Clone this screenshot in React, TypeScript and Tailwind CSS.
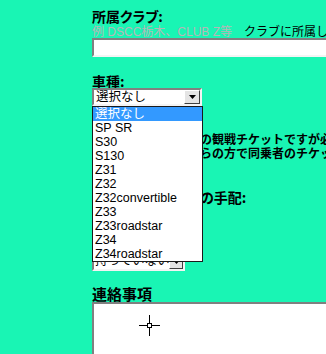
import React from "react";

const label =
  "text-[14px] leading-[14px] font-bold text-black whitespace-nowrap [font-feature-settings:'palt'] font-['Noto_Sans_CJK_JP',sans-serif]";

const options = [
  "選択なし",
  "SP SR",
  "S30",
  "S130",
  "Z31",
  "Z32",
  "Z32convertible",
  "Z33",
  "Z33roadstar",
  "Z34",
  "Z34roadstar",
];

function Arrow() {
  return (
    <div className="flex h-full w-[16px] items-center justify-center border border-t-[#ffffff] border-l-[#ffffff] border-b-[#404040] border-r-[#404040] bg-[#e4e4e4]">
      <svg width="7" height="4" viewBox="0 0 7 4">
        <polygon points="0,0 7,0 3.5,4" fill="#000" />
      </svg>
    </div>
  );
}

export default function App() {
  return (
    <div className="relative h-[354px] w-[326px] overflow-hidden bg-[#19f5b4] font-['Liberation_Sans','Noto_Sans_CJK_JP',sans-serif] text-black">
      <div className="flex flex-col pl-[92px] pt-[9px]">
        <div className={label + " h-[15px]"}>所属クラブ:</div>
        <div className="mt-[2px] h-[12px] whitespace-nowrap text-[12px] leading-[12px]">
          <span className="text-[#b6b6b6]">例 DSCC栃木、CLUB Z等</span>
          <span>　クラブに所属している方はクラブ名をご記入ください</span>
        </div>
        <div className="h-[19px] w-[300px] shrink-0 border-2 border-t-[#808080] border-l-[#808080] border-b-[#f4f4f4] border-r-[#f4f4f4] bg-white" />

        <div className={label + " mt-[17px] h-[14px]"}>車種:</div>
        <div className="relative h-[18px] w-[110px]">
          <div className="flex h-[18px] w-[110px] items-stretch border-2 border-t-[#808080] border-l-[#808080] border-b-[#f4f4f4] border-r-[#f4f4f4] bg-white">
            <div className="flex-1 pl-[2px] text-[12.5px] leading-[14px]">選択なし</div>
            <Arrow />
          </div>
          <div className="absolute left-0 top-[18px] z-10 w-[111px] border border-[#1a1a1a] bg-white">
            {options.map((o, i) => (
              <div
                key={o}
                className={
                  i === 0
                    ? "h-[14px] whitespace-nowrap bg-[#3399ff] pl-[2px] text-[12.5px] leading-[14px] text-white"
                    : "h-[14px] whitespace-nowrap pl-[2px] text-[12.5px] leading-[14px] text-black"
                }
              >
                {o}
              </div>
            ))}
          </div>
        </div>

        <div className="mt-[26px] flex flex-col font-['Noto_Sans_CJK_JP',sans-serif] text-[12px] font-bold leading-[14px]">
          <div className="h-[14px] whitespace-nowrap">
            <span className="inline-block w-[108px] overflow-hidden align-top">お渡しするのは決勝日</span>
            <span>の観戦チケットですが必要な方は</span>
          </div>
          <div className="h-[14px] whitespace-nowrap">
            <span className="inline-block w-[108px] overflow-hidden align-top">ご希望の場合はこち</span>
            <span>らの方で同乗者のチケットも手配します</span>
          </div>
        </div>

        <div className={label + " mt-[30px] h-[14px]"}>
          <span className="inline-block w-[108px] overflow-hidden align-top">同乗者チケット</span>
          <span>の手配:</span>
        </div>

        <div className="mt-[48px] flex h-[19px] w-[93px] items-stretch border-2 border-t-[#808080] border-l-[#808080] border-b-[#f4f4f4] border-r-[#f4f4f4] bg-white">
          <div className="flex-1 whitespace-nowrap pl-[1px] text-[12.5px] leading-[15px]">持っていない</div>
          <Arrow />
        </div>

        <div className={label + " mt-[14px] h-[17px] text-[15px] leading-[17px]"}>連絡事項</div>
        <div className="h-[60px] w-[300px] shrink-0 border-2 border-t-[#808080] border-l-[#808080] border-b-[#f4f4f4] border-r-[#f4f4f4] bg-white" />
      </div>

      <svg
        className="absolute left-[138px] top-[314px] z-20"
        width="23"
        height="23"
        viewBox="0 0 23 23"
      >
        <line x1="1" y1="11.5" x2="22" y2="11.5" stroke="#000" strokeWidth="1" />
        <line x1="11.5" y1="1" x2="11.5" y2="22" stroke="#000" strokeWidth="1" />
        <rect x="9.5" y="9.5" width="4" height="4" fill="#fff" stroke="#000" strokeWidth="1" />
      </svg>
    </div>
  );
}
